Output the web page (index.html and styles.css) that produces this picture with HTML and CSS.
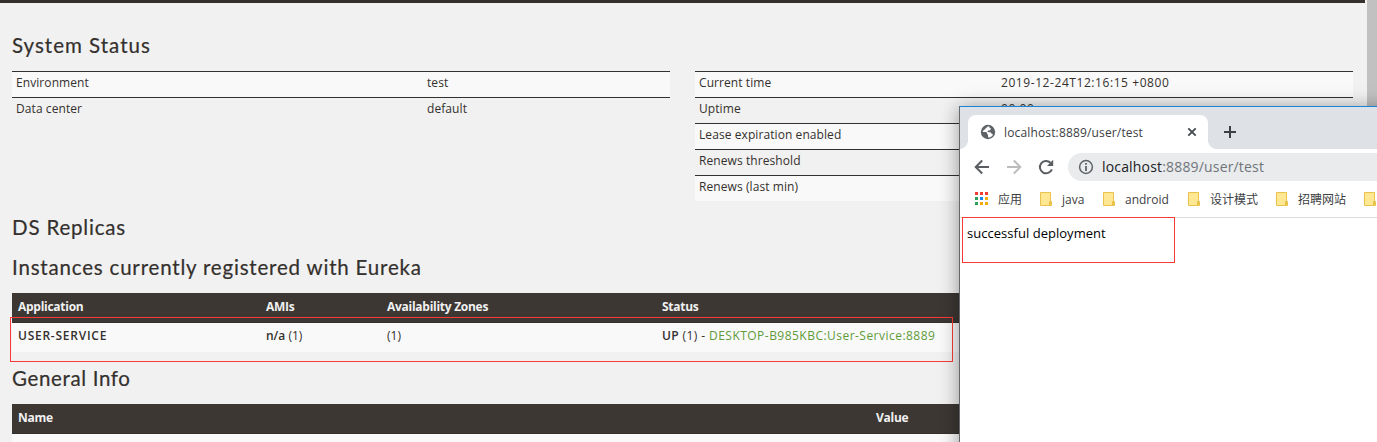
FILE: index.html
```
<!DOCTYPE html>
<html lang="en">
<head>
<meta charset="utf-8">
<title>Eureka</title>
<link rel="stylesheet" href="styles.css">
</head>
<body>
<div class="page">
  <div class="navbar"></div>
  <main class="content">
    <h1 class="title title-status">System Status</h1>
    <div class="status-grid">
      <div class="props props-left">
        <div class="prop"><span>Environment</span><span>test</span></div>
        <div class="prop"><span>Data center</span><span>default</span></div>
      </div>
      <div class="props props-right">
        <div class="prop"><span>Current time</span><span class="time">2019-12-24T12:16:15 +0800</span></div>
        <div class="prop"><span>Uptime</span><span class="time">00:00</span></div>
        <div class="prop"><span>Lease expiration enabled</span></div>
        <div class="prop"><span>Renews threshold</span></div>
        <div class="prop"><span>Renews (last min)</span></div>
      </div>
    </div>
    <h1 class="title title-ds">DS Replicas</h1>
    <h1 class="title title-inst">Instances currently registered with Eureka</h1>
    <div class="apps">
      <div class="row head"><span>Application</span><span>AMIs</span><span>Availability Zones</span><span>Status</span></div>
      <div class="row"><b class="service">USER-SERVICE</b><span><b>n/a</b> (1)</span><span>(1)</span><span class="status"><b>UP</b> (1) - <a class="instance">DESKTOP-B985KBC:User-Service:8889</a></span></div>
    </div>
    <h1 class="title title-info">General Info</h1>
    <div class="info">
      <div class="row head"><span>Name</span><span>Value</span></div>
      <div class="row"></div>
    </div>
  </main>
  <div class="scrollbar"></div>
  <div class="mark mark-app"></div>

  <section class="window">
    <div class="tabstrip">
      <div class="tab">
        <svg class="globe" width="16" height="16" viewBox="0 0 16 16"><circle cx="8" cy="8" r="7.2" fill="#5f6368"/><path d="M8.8 2.3c-2.300.4-1.500 1.400-2.700 1.700-.8.2-.5 1.200-1.500 1.500-.8.3-1 1-2 1.600.1 1 1 .9 2.300.9 1.700 0 2.200.3 2.200 1.500 0 1 .9.800.9 1.500 0 .9 0 1.700.3 2.600 1.900 0 3.700-1.200 4.700-2.900-.2-.7-.800-.7-1.300-.8-.5-1.500-1.300-1.600-2.400-1.700-.7 0-1.500.1-1.700-.7-.2-.800.5-1.200 1.700-1.100.8.1.9-.7 1.400-1.200.5-.6 0-1-.8-1.200-.5-.3-.2-1.200-1.100-1.700z" fill="#fff"/></svg>
        <span class="tab-title">localhost:8889/user/test</span>
        <svg class="close" width="10" height="10" viewBox="0 0 10 10"><path d="M1.300 1.300l7.400 7.400M8.700 1.300L1.300 8.700" stroke="#45494d" stroke-width="1.800"/></svg>
      </div>
      <svg class="plus" width="14" height="14" viewBox="0 0 14 14"><path d="M7 1v12M1 7h12" stroke="#3c4043" stroke-width="2"/></svg>
    </div>
    <div class="toolbar">
      <svg width="16" height="16" viewBox="0 0 16 16"><path d="M15 8H2M8.200 1.500L1.700 8l6.500 6.500" fill="none" stroke="#5a5e63" stroke-width="2"/></svg>
      <svg width="16" height="16" viewBox="0 0 16 16"><path d="M1 8h13M7.800 1.500L14.300 8l-6.500 6.500" fill="none" stroke="#babcbe" stroke-width="2"/></svg>
      <svg width="16" height="16" viewBox="0 0 16 16"><path d="M13.900 10.300A6.200 6.200 0 1 1 12.500 3.700" fill="none" stroke="#5a5e63" stroke-width="2"/><path d="M15.200.7v6.200H9z" fill="#5a5e63"/></svg>
      <div class="omnibox">
        <svg width="16" height="16" viewBox="0 0 16 16"><circle cx="8" cy="8" r="6.400" fill="none" stroke="#5f6368" stroke-width="1.500"/><path d="M8 3.900v1.800M8 7v5" stroke="#5f6368" stroke-width="1.800"/></svg>
        <span class="url"><span class="host">localhost</span>:8889/user/test</span>
      </div>
    </div>
    <div class="bookmarks">
      <svg class="apps-icon" width="13" height="13" viewBox="0 0 13 13" shape-rendering="crispEdges"><path d="M0 0h3v3H0zM5 0h3v3H5zM10 0h3v3h-3z" fill="#f23b33"/><path d="M0 5h3v3H0zM0 10h3v3H0z" fill="#2d9f5b"/><path d="M5 5h3v3H5z" fill="#1a84f2"/><path d="M10 5h3v3h-3zM5 10h3v3H5zM10 10h3v3h-3z" fill="#f6ac08"/></svg>
      <span class="bm bm-apps">应用</span>
      <svg class="folder" width="12" height="14" viewBox="0 0 12 14"><path d="M.5.5h10v13H.5zM9.500 9.500h2v4h-2z" fill="#ffe793" stroke="#e9c34b"/></svg><span class="bm bm-java">java</span>
      <svg class="folder" width="12" height="14" viewBox="0 0 12 14"><path d="M.5.5h10v13H.5zM9.500 9.500h2v4h-2z" fill="#ffe793" stroke="#e9c34b"/></svg><span class="bm bm-android">android</span>
      <svg class="folder" width="12" height="14" viewBox="0 0 12 14"><path d="M.5.5h10v13H.5zM9.500 9.500h2v4h-2z" fill="#ffe793" stroke="#e9c34b"/></svg><span class="bm bm-cn">设计模式</span>
      <svg class="folder" width="12" height="14" viewBox="0 0 12 14"><path d="M.5.5h10v13H.5zM9.500 9.500h2v4h-2z" fill="#ffe793" stroke="#e9c34b"/></svg><span class="bm bm-cn">招聘网站</span>
      <svg class="folder" width="12" height="14" viewBox="0 0 12 14"><path d="M.5.5h10v13H.5zM9.500 9.500h2v4h-2z" fill="#ffe793" stroke="#e9c34b"/></svg>
    </div>
    <div class="body">successful deployment</div>
    <div class="mark mark-body"></div>
  </section>
</div>
</body>
</html>
```
FILE: styles.css
```
* { box-sizing: border-box; }
body { margin: 0; overflow: hidden; }
svg { flex: none; display: block; }

.page {
  position: relative;
  width: 1377px;
  height: 442px;
  overflow: hidden;
  background: #f1f1f1;
  color: #34302d;
  font: 12px/18px "Open Sans", "Noto Sans", sans-serif;
}
.navbar { width: 1365px; height: 3px; background: #34302d; }
.content { width: 1341px; margin-left: 12px; }

.title {
  margin: 0;
  font: 400 20.5px/24px Lato, "Open Sans", sans-serif;
  letter-spacing: 0.81px;
  white-space: nowrap;
  -webkit-text-stroke: 0.2px #34302d;
}
.title-status { padding-top: 30px; height: 68px; letter-spacing: 1px; }
.title-ds { padding-top: 14px; height: 54px; }
.title-inst { height: 38px; }
.title-info { padding-top: 14px; height: 52px; letter-spacing: 0.65px; }

.status-grid {
  display: grid;
  grid-template-columns: 658px 658px;
  justify-content: space-between;
  align-items: start;
}
.prop {
  display: grid;
  height: 26px;
  padding: 2px 4px 0;
  border-top: 1px solid #34302d;
  letter-spacing: 0.08px;
  white-space: nowrap;
}
.prop:nth-child(odd) { background: #f9f9f9; }
.props-left .prop { grid-template-columns: 411px 1fr; }
.props-right .prop { grid-template-columns: 302px 1fr; }
.time { letter-spacing: 0.57px; }

.row {
  display: grid;
  height: 29px;
  padding: 4px 6px 0;
  background: #f9f9f9;
  white-space: nowrap;
}
.row b { font-weight: 600; }
.head {
  height: 30px;
  padding-top: 5px;
  background: #3c3733;
  border-bottom: 1px solid #34302d;
  color: #f1f1f1;
  font-weight: 700;
  letter-spacing: -0.27px;
}
.apps .row { grid-template-columns: 248px 121px 275px 1fr; }
.info .row { grid-template-columns: 858px 1fr; }
.service { letter-spacing: 0.75px; }
.status { letter-spacing: 0.4px; }
.instance { color: #609b39; letter-spacing: 0.47px; }

.scrollbar {
  position: absolute;
  top: 0;
  right: 0;
  width: 10px;
  height: 442px;
  background: #c1c1c1;
}
.mark { position: absolute; border: 1px solid #f93a37; }
.mark-app { left: 10px; top: 317px; width: 943px; height: 45px; }
.mark-body { left: 2px; top: 110px; width: 213px; height: 46px; }

.window {
  position: absolute;
  left: 959px;
  top: 106px;
  width: 440px;
  height: 360px;
  background: #fff;
  border-top: 1px solid #1883d7;
  border-left: 1px solid #66676a;
  box-shadow: 0 2px 18px rgba(0, 0, 0, 0.4);
}
.tabstrip {
  display: flex;
  height: 42px;
  padding: 8px 0 0 8px;
  background: #dee1e6;
}
.tab {
  position: relative;
  display: flex;
  align-items: center;
  width: 240px;
  height: 34px;
  padding: 0 11px 0 12px;
  background: #fff;
  border-radius: 8px 8px 0 0;
}
.tab::before, .tab::after {
  content: "";
  position: absolute;
  bottom: 0;
  width: 8px;
  height: 8px;
}
.tab::before { left: -8px; background: radial-gradient(circle at 0 0, transparent 7.5px, #fff 8px); }
.tab::after { right: -8px; background: radial-gradient(circle at 100% 0, transparent 7.5px, #fff 8px); }
.tab-title { flex: 1; margin-left: 8px; padding-top: 2px; color: #3c4043; letter-spacing: 0.15px; }
.plus { margin: 10px 0 0 15px; }

.toolbar {
  display: flex;
  align-items: center;
  height: 36px;
  padding-left: 14px;
  gap: 16px;
}
.omnibox {
  display: flex;
  align-items: center;
  flex: 1;
  height: 28px;
  margin-left: -2px;
  padding-left: 10px;
  gap: 8px;
  border-radius: 14px 0 0 14px;
  background: #e9ebed;
}
.url { font-size: 14px; color: #70757a; letter-spacing: 0.17px; }
.host { color: #202124; }

.bookmarks {
  display: flex;
  align-items: center;
  height: 33px;
  padding: 0 0 4px 15px;
  border-bottom: 1px solid #dadce0;
  color: #3c4043;
  font-family: "Open Sans", "Noto Sans CJK SC", sans-serif;
  white-space: nowrap;
}
.apps-icon { margin-top: -1px; }
.bm { flex: none; margin-left: 10px; padding-top: 2px; }
.bm-apps { width: 42px; }
.bm-java { width: 41px; }
.bm-android { width: 63px; }
.bm-cn { width: 66px; }
.body { padding: 6px 7px; color: #000; font-size: 13px; letter-spacing: 0.03px; }
```
